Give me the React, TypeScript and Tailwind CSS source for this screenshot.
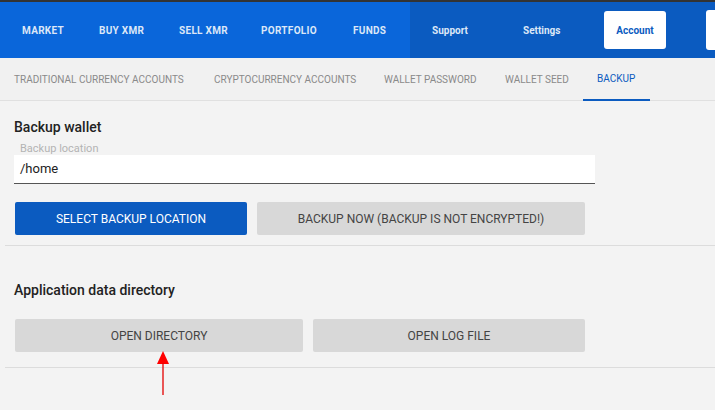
import React from "react";

const NAV_LEFT = [
  { label: "MARKET", w: "w-[77px]" },
  { label: "BUY XMR", w: "w-[80px]" },
  { label: "SELL XMR", w: "w-[82px]" },
  { label: "PORTFOLIO", w: "w-[92px]" },
  { label: "FUNDS", w: "w-[57px]" },
];

const TABS = [
  { label: "TRADITIONAL CURRENCY ACCOUNTS", w: "w-[200px]" },
  { label: "CRYPTOCURRENCY ACCOUNTS", w: "w-[170px]" },
  { label: "WALLET PASSWORD", w: "w-[121px]" },
  { label: "WALLET SEED", w: "w-[92px]" },
  { label: "BACKUP", w: "w-[67px]" },
];

function GrayButton({ label, w }: { label: string; w: string }) {
  return (
    <button className={`${w} h-[33px] rounded-[2px] bg-[#d8d8d8] text-[12px] text-[#444]`}>
      {label}
    </button>
  );
}

export default function App() {
  return (
    <div
      className="w-[715px] h-[410px] overflow-hidden bg-[#f3f3f3] relative"
      style={{ fontFamily: "Roboto, 'Liberation Sans', sans-serif" }}
    >
      <div className="h-[2px] bg-[#333]" />
      {/* top nav */}
      <div className="h-[56px] flex bg-[#0b5bc0]">
        <div className="w-[410px] flex items-center bg-[#0a66da] pl-[22px]">
          {NAV_LEFT.map((n) => (
            <div
              key={n.label}
              className={`${n.w} shrink-0 text-[10px] font-bold text-[#dce7f7] tracking-[0.3px]`}
            >
              {n.label}
            </div>
          ))}
        </div>
        <div className="flex items-center pl-[22px]">
          <div className="w-[91px] text-[10px] font-bold text-[#dce7f7]">Support</div>
          <div className="w-[81px] text-[10px] font-bold text-[#dce7f7]">Settings</div>
          <div className="w-[62px] h-[38px] bg-white rounded-[3px] flex items-center justify-center text-[10px] font-bold text-[#0b5bc0]">
            Account
          </div>
          <div className="ml-[40px] w-[40px] h-[40px] bg-white rounded-[3px]" />
        </div>
      </div>
      {/* tabs */}
      <div className="h-[43px] bg-[#f1f1f1] border-b border-[#e0e0e0] flex">
        {TABS.map((t) => (
          <div
            key={t.label}
            className={`${t.w} shrink-0 whitespace-nowrap pl-[14px] flex items-center text-[10px] ${
              t.label === "BACKUP"
                ? "text-[#0b5bc0] border-b-2 border-[#0b5bc0] -mb-[1px]"
                : "text-[#8a8a8a]"
            }`}
          >
            {t.label}
          </div>
        ))}
      </div>

      {/* backup wallet */}
      <div className="pt-[16px] pl-[14px]">
        <div className="text-[14px] font-medium text-[#222] leading-[20px]">Backup wallet</div>
        <div className="pl-[6px] mt-[5px] text-[11px] text-[#b3b3b3] leading-[13px]">
          Backup location
        </div>
        <div className="w-[581px] h-[29px] bg-white border-b border-[#555] flex items-center pl-[6px] text-[13px] text-[#222]">
          /home
        </div>
        <div className="flex gap-[10px] mt-[18px] pl-[1px]">
          <button className="w-[232px] h-[33px] rounded-[2px] bg-[#0b5bc0] text-[12px] text-white">
            SELECT BACKUP LOCATION
          </button>
          <GrayButton label="BACKUP NOW (BACKUP IS NOT ENCRYPTED!)" w="w-[328px]" />
        </div>
      </div>
      <div className="ml-[5px] mt-[10px] border-t border-[#dcdcdc]" />

      {/* application data */}
      <div className="pt-[34px] pl-[14px]">
        <div className="text-[14px] font-medium text-[#222] leading-[20px]">
          Application data directory
        </div>
        <div className="flex gap-[10px] mt-[19px] pl-[1px]">
          <GrayButton label="OPEN DIRECTORY" w="w-[288px]" />
          <GrayButton label="OPEN LOG FILE" w="w-[272px]" />
        </div>
      </div>
      <div className="ml-[5px] mt-[15px] border-t border-[#dcdcdc]" />

      {/* red annotation arrow */}
      <svg className="absolute left-[155px] top-[351px]" width="16" height="45" viewBox="0 0 16 45">
        <path d="M8 0 L14 13 L2 13 Z" fill="#ff0000" />
        <line x1="8" y1="12" x2="8" y2="44" stroke="#e30000" strokeWidth="1.3" />
      </svg>
    </div>
  );
}
